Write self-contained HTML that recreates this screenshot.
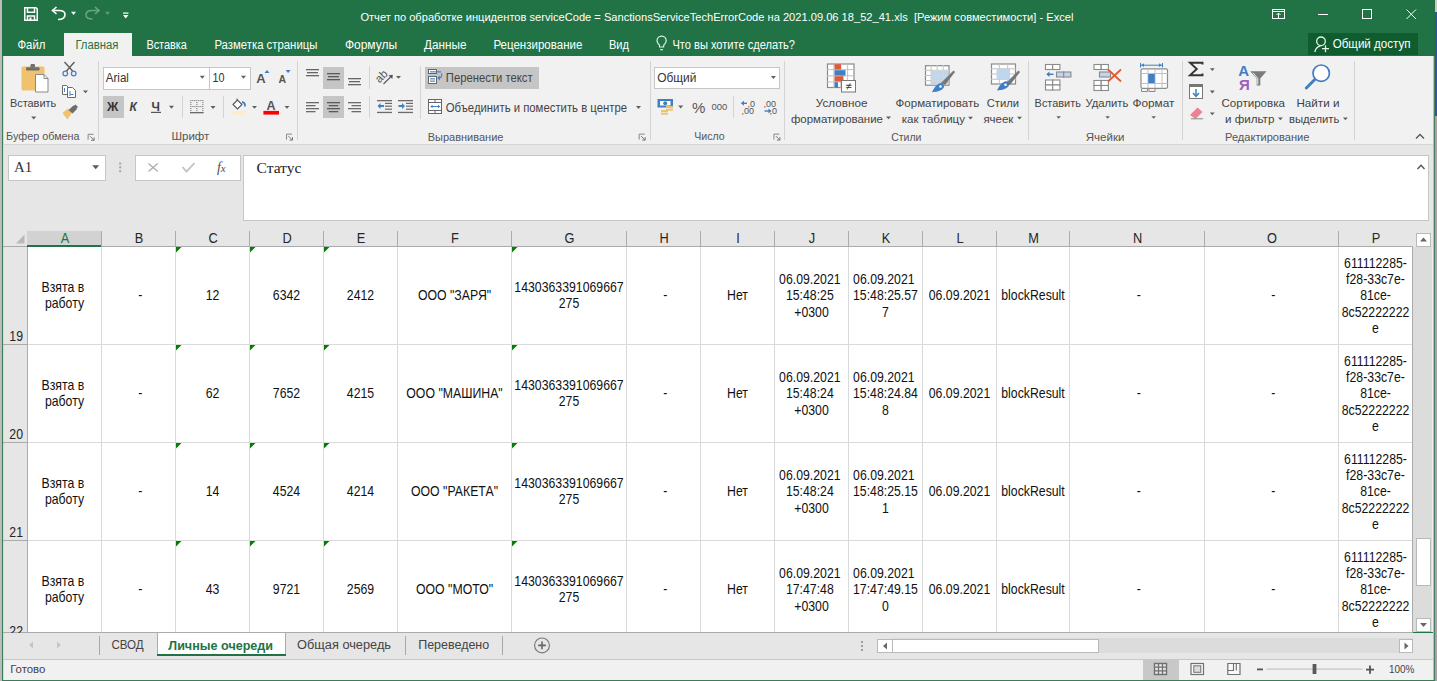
<!DOCTYPE html>
<html><head><meta charset="utf-8"><title>Excel</title>
<style>html,body{margin:0;padding:0;width:1437px;height:681px;overflow:hidden;background:#fff} svg{display:block}</style>
</head><body>
<svg width="1437" height="681" viewBox="0 0 1437 681">
<defs><clipPath id="gridclip"><rect x="28" y="247" width="1384" height="385"/></clipPath></defs>
<rect x="0" y="0" width="1437" height="681" fill="#bcbcbc" />
<rect x="2" y="0" width="1433" height="681" fill="#217346" />
<rect x="2" y="56" width="1" height="625" fill="#3b7d58" />
<rect x="3" y="56" width="1" height="625" fill="#cddfd3" />
<rect x="1434" y="56" width="1" height="625" fill="#4b7f63" />
<rect x="1433" y="56" width="1" height="625" fill="#a9c6b5" />
<rect x="1435" y="0" width="2" height="12" fill="#c8c8c8" />
<rect x="1435" y="12" width="2" height="104" fill="#2b5797" />
<rect x="1435" y="116" width="2" height="565" fill="#a3a3a3" />
<text x="360.4" y="21" font-family="'Liberation Sans', sans-serif" font-size="11.2" fill="#ffffff" textLength="713.0" lengthAdjust="spacingAndGlyphs" >Отчет по обработке инцидентов serviceCode = SanctionsServiceTechErrorCode на 2021.09.06 18_52_41.xls  [Режим совместимости] - Excel</text>
<rect x="64" y="33" width="68" height="23" fill="#f1f1f1" />
<text x="17.4" y="48.5" font-family="'Liberation Sans', sans-serif" font-size="12" fill="#ffffff" textLength="28.0" lengthAdjust="spacingAndGlyphs" >Файл</text>
<text x="75.4" y="48.5" font-family="'Liberation Sans', sans-serif" font-size="12" fill="#217346" textLength="43.0" lengthAdjust="spacingAndGlyphs" >Главная</text>
<text x="146.4" y="48.5" font-family="'Liberation Sans', sans-serif" font-size="12" fill="#ffffff" textLength="40.5" lengthAdjust="spacingAndGlyphs" >Вставка</text>
<text x="214.4" y="48.5" font-family="'Liberation Sans', sans-serif" font-size="12" fill="#ffffff" textLength="103.0" lengthAdjust="spacingAndGlyphs" >Разметка страницы</text>
<text x="344.9" y="48.5" font-family="'Liberation Sans', sans-serif" font-size="12" fill="#ffffff" textLength="52.2" lengthAdjust="spacingAndGlyphs" >Формулы</text>
<text x="424.09999999999997" y="48.5" font-family="'Liberation Sans', sans-serif" font-size="12" fill="#ffffff" textLength="42.3" lengthAdjust="spacingAndGlyphs" >Данные</text>
<text x="493.4" y="48.5" font-family="'Liberation Sans', sans-serif" font-size="12" fill="#ffffff" textLength="89.0" lengthAdjust="spacingAndGlyphs" >Рецензирование</text>
<text x="609.0" y="48.5" font-family="'Liberation Sans', sans-serif" font-size="12" fill="#ffffff" textLength="20.0" lengthAdjust="spacingAndGlyphs" >Вид</text>
<text x="672.4" y="48.5" font-family="'Liberation Sans', sans-serif" font-size="12" fill="#ffffff" textLength="122.6" lengthAdjust="spacingAndGlyphs" >Что вы хотите сделать?</text>
<rect x="1308" y="33" width="110" height="22" fill="#0f5c2f" />
<text x="1332.7" y="48" font-family="'Liberation Sans', sans-serif" font-size="12" fill="#ffffff" textLength="77.9" lengthAdjust="spacingAndGlyphs" >Общий доступ</text>
<rect x="4" y="56" width="1429" height="88" fill="#f1f1f1" />
<rect x="3" y="144" width="1430" height="1" fill="#d6d6d6" />
<rect x="98" y="61" width="1" height="79" fill="#d4d4d4" />
<rect x="297" y="61" width="1" height="79" fill="#d4d4d4" />
<rect x="650" y="61" width="1" height="79" fill="#d4d4d4" />
<rect x="784" y="61" width="1" height="79" fill="#d4d4d4" />
<rect x="1028" y="61" width="1" height="79" fill="#d4d4d4" />
<rect x="1182" y="61" width="1" height="79" fill="#d4d4d4" />
<rect x="1354" y="61" width="1" height="79" fill="#d4d4d4" />
<text x="9.9" y="106.6" font-family="'Liberation Sans', sans-serif" font-size="11.5" fill="#444444" textLength="46.3" lengthAdjust="spacingAndGlyphs" >Вставить</text>
<text x="6.1000000000000005" y="140" font-family="'Liberation Sans', sans-serif" font-size="10.2" fill="#555" textLength="73.5" lengthAdjust="spacingAndGlyphs" >Буфер обмена</text>
<rect x="103" y="67" width="147" height="22" fill="#ffffff" stroke="#c6c6c6" stroke-width="1" shape-rendering="crispEdges"/>
<rect x="209" y="67" width="1" height="22" fill="#c6c6c6" />
<text x="105.80000000000001" y="81.5" font-family="'Liberation Sans', sans-serif" font-size="12" fill="#333" textLength="23.1" lengthAdjust="spacingAndGlyphs" >Arial</text>
<text x="212.4" y="81.5" font-family="'Liberation Sans', sans-serif" font-size="12" fill="#333" textLength="12.0" lengthAdjust="spacingAndGlyphs" >10</text>
<rect x="103" y="96" width="21" height="22" fill="#c5c5c5" />
<text x="171.4" y="140" font-family="'Liberation Sans', sans-serif" font-size="10.2" fill="#555" textLength="38.0" lengthAdjust="spacingAndGlyphs" >Шрифт</text>
<rect x="323" y="67" width="21" height="22" fill="#c5c5c5" />
<rect x="323" y="96" width="21" height="22" fill="#c5c5c5" />
<rect x="425" y="67" width="114" height="22" fill="#c5c5c5" />
<text x="445.79999999999995" y="82.2" font-family="'Liberation Sans', sans-serif" font-size="12" fill="#444444" textLength="86.8" lengthAdjust="spacingAndGlyphs" >Перенести текст</text>
<text x="445.79999999999995" y="112" font-family="'Liberation Sans', sans-serif" font-size="12" fill="#444444" textLength="181.3" lengthAdjust="spacingAndGlyphs" >Объединить и поместить в центре</text>
<text x="427.7" y="140.5" font-family="'Liberation Sans', sans-serif" font-size="10.2" fill="#555" textLength="75.7" lengthAdjust="spacingAndGlyphs" >Выравнивание</text>
<rect x="654.5" y="67.5" width="125" height="21" fill="#ffffff" stroke="#c6c6c6" stroke-width="1"/>
<text x="657.1999999999999" y="81.6" font-family="'Liberation Sans', sans-serif" font-size="12" fill="#333" textLength="39.2" lengthAdjust="spacingAndGlyphs" >Общий</text>
<text x="694.1999999999999" y="140.4" font-family="'Liberation Sans', sans-serif" font-size="10.2" fill="#555" textLength="30.4" lengthAdjust="spacingAndGlyphs" >Число</text>
<text x="815.8" y="106.8" font-family="'Liberation Sans', sans-serif" font-size="11.5" fill="#444444" textLength="51.6" lengthAdjust="spacingAndGlyphs" >Условное</text>
<text x="790.9" y="122.8" font-family="'Liberation Sans', sans-serif" font-size="11.5" fill="#444444" textLength="92.1" lengthAdjust="spacingAndGlyphs" >форматирование</text>
<text x="895.6" y="106.8" font-family="'Liberation Sans', sans-serif" font-size="11.5" fill="#444444" textLength="83.6" lengthAdjust="spacingAndGlyphs" >Форматировать</text>
<text x="901.8" y="122.8" font-family="'Liberation Sans', sans-serif" font-size="11.5" fill="#444444" textLength="63.2" lengthAdjust="spacingAndGlyphs" >как таблицу</text>
<text x="986.6999999999999" y="106.8" font-family="'Liberation Sans', sans-serif" font-size="11.5" fill="#444444" textLength="32.4" lengthAdjust="spacingAndGlyphs" >Стили</text>
<text x="983.4" y="122.8" font-family="'Liberation Sans', sans-serif" font-size="11.5" fill="#444444" textLength="30.0" lengthAdjust="spacingAndGlyphs" >ячеек</text>
<text x="891.1999999999999" y="140.5" font-family="'Liberation Sans', sans-serif" font-size="10.2" fill="#555" textLength="30.2" lengthAdjust="spacingAndGlyphs" >Стили</text>
<text x="1034.6000000000001" y="107" font-family="'Liberation Sans', sans-serif" font-size="11.5" fill="#444444" textLength="46.3" lengthAdjust="spacingAndGlyphs" >Вставить</text>
<text x="1085.4" y="107" font-family="'Liberation Sans', sans-serif" font-size="11.5" fill="#444444" textLength="43.0" lengthAdjust="spacingAndGlyphs" >Удалить</text>
<text x="1132.4" y="107" font-family="'Liberation Sans', sans-serif" font-size="11.5" fill="#444444" textLength="42.0" lengthAdjust="spacingAndGlyphs" >Формат</text>
<text x="1085.8000000000002" y="140.6" font-family="'Liberation Sans', sans-serif" font-size="10.2" fill="#555" textLength="38.6" lengthAdjust="spacingAndGlyphs" >Ячейки</text>
<text x="1221.4" y="107" font-family="'Liberation Sans', sans-serif" font-size="11.5" fill="#444444" textLength="63.6" lengthAdjust="spacingAndGlyphs" >Сортировка</text>
<text x="1225.0" y="122.8" font-family="'Liberation Sans', sans-serif" font-size="11.5" fill="#444444" textLength="49.4" lengthAdjust="spacingAndGlyphs" >и фильтр</text>
<text x="1296.4" y="107" font-family="'Liberation Sans', sans-serif" font-size="11.5" fill="#444444" textLength="43.0" lengthAdjust="spacingAndGlyphs" >Найти и</text>
<text x="1288.9" y="122.8" font-family="'Liberation Sans', sans-serif" font-size="11.5" fill="#444444" textLength="50.5" lengthAdjust="spacingAndGlyphs" >выделить</text>
<text x="1225.0" y="140.5" font-family="'Liberation Sans', sans-serif" font-size="10.2" fill="#555" textLength="84.4" lengthAdjust="spacingAndGlyphs" >Редактирование</text>
<g fill="none" stroke="#fff" stroke-width="1.5"><path d="M24.75,7.75 H36 L37.25,9 V20.25 H24.75 Z"/><path d="M27.5,7.75 V12.25 H34.5 V7.75"/><path d="M27.5,20.25 V16 H34.5 V20.25"/></g>
<rect x="29.5" y="17.5" width="2" height="2.5" fill="#fff"/>
<path d="M58,19.5 C62.5,19.5 65,17.5 65,14.5 C65,11.5 62.5,10.5 59,10.5 H53.5" fill="none" stroke="#fff" stroke-width="1.6"/><path d="M56.5,7 L52.5,10.5 L56.5,14" fill="none" stroke="#fff" stroke-width="1.6"/>
<polygon points="71,11.7 76,11.7 73.5,14.899999999999999" fill="#fff"/>
<path d="M92.5,19 C88,19 86,17.5 86,15 C86,12 88.5,10.5 92,10.5 H98" fill="none" stroke="#6aa584" stroke-width="1.6"/><path d="M95,7 L99,10.5 L95,14" fill="none" stroke="#6aa584" stroke-width="1.6"/>
<polygon points="105,11.7 110,11.7 107.5,14.899999999999999" fill="#5c9c78"/>
<rect x="123" y="12.5" width="5.5" height="1.2" fill="#fff"/>
<polygon points="123,15 128.5,15 125.75,18.5" fill="#fff"/>
<g fill="none" stroke="#fff" stroke-width="1"><rect x="1272.5" y="9.5" width="12" height="9"/><path d="M1272.5,11.5 H1284.5 M1278.5,18.5 V13 M1276.5,15 L1278.5,13 L1280.5,15"/><path d="M1318,14.5 H1328"/><rect x="1362.5" y="9.5" width="9" height="9"/><path d="M1406.5,9.5 L1416,19 M1416,9.5 L1406.5,19"/></g>
<g fill="none" stroke="#e6efe9" stroke-width="1.2"><path d="M659.6,47 L659.4,45 C657.5,43.5 657,42 657,40.8 C657,38.2 659,36.2 661.6,36.2 C664.2,36.2 666.2,38.2 666.2,40.8 C666.2,42 665.7,43.5 663.8,45 L663.6,47 Z"/><path d="M660.2,49.7 H663"/></g>
<g fill="none" stroke="#e8f0ea" stroke-width="1.3"><circle cx="1321" cy="41.3" r="4.3"/><path d="M1314.8,52 C1315.5,48.5 1317.5,46.5 1320.5,45.8"/><path d="M1322,48.7 H1329 M1325.5,45.2 V52.2"/></g>
<rect x="21.5" y="66.5" width="23" height="24" rx="1.5" fill="#f0c26e"/>
<rect x="26" y="67.3" width="13.5" height="3.2" rx="1" fill="#6d6d6d"/>
<rect x="30.5" y="64" width="4.5" height="3.5" rx="1.2" fill="#6d6d6d"/>
<path d="M35.5,74.5 H44 L48,78.5 V92 H35.5 Z" fill="#fff" stroke="#8a8a8a" stroke-width="1"/>
<path d="M44,74.5 V78.5 H48" fill="none" stroke="#8a8a8a" stroke-width="1"/>
<polygon points="31.2,116.6 36.2,116.6 33.7,119.6" fill="#5f5f5f"/>
<g fill="none" stroke="#5b5b5b" stroke-width="1.3"><path d="M64.5,62 L73,71.5 M74.5,62 L66,71.5"/></g>
<g fill="none" stroke="#4a82c3" stroke-width="1.3"><circle cx="65.3" cy="73.5" r="2.3"/><circle cx="73.7" cy="73.5" r="2.3"/></g>
<path d="M62.5,85.5 H66.5 L68.5,87.5 V94.5 H62.5 Z" fill="#fff" stroke="#6b6b6b" stroke-width="1"/>
<path d="M67.5,87.5 H72.5 L75.5,90.5 V97.5 H67.5 Z" fill="#fff" stroke="#6b6b6b" stroke-width="1"/>
<rect x="64" y="88" width="1" height="4" fill="#4a82c3"/><rect x="69.5" y="91" width="1" height="5" fill="#4a82c3"/><rect x="70.5" y="94" width="3" height="1" fill="#4a82c3"/>
<polygon points="83,90.5 88,90.5 85.5,93.3" fill="#5f5f5f"/>
<path d="M62.5,113 L68,108.5 L72,112.5 L67.5,119.5 Z" fill="#f0c26e"/>
<path d="M68.5,110 L73.5,105.5 L77,109 L72.5,113.5 Z" fill="#6d6d6d"/>
<path d="M72.5,107 L75.5,104.5 L78,107 L75.5,109.5 Z" fill="#6d6d6d"/>
<polygon points="199.8,75.8 204.8,75.8 202.3,78.8" fill="#5f5f5f"/>
<polygon points="241,75.8 246,75.8 243.5,78.8" fill="#5f5f5f"/>
<text x="256.3" y="83" font-family="'Liberation Sans', sans-serif" font-size="13" fill="#555" font-weight="bold" >A</text>
<polygon points="264.5,73 269.5,73 267,70" fill="#3f7fc4"/>
<text x="278.6" y="83" font-family="'Liberation Sans', sans-serif" font-size="10.5" fill="#555" font-weight="bold" >A</text>
<polygon points="285.6,70 290.6,70 288.1,73" fill="#3f7fc4"/>
<text x="107" y="111" font-family="'Liberation Sans', sans-serif" font-size="12.5" fill="#333" font-weight="bold" >Ж</text>
<text x="129.5" y="111" font-family="'Liberation Sans', sans-serif" font-size="12" fill="#444" font-weight="bold" font-style="italic">К</text>
<text x="151.5" y="111" font-family="'Liberation Sans', sans-serif" font-size="12" fill="#444" font-weight="bold" >Ч</text>
<rect x="151" y="111.8" width="10" height="1.2" fill="#555" />
<polygon points="169,105.8 174,105.8 171.5,108.8" fill="#5f5f5f"/>
<rect x="182" y="96" width="1" height="22" fill="#d4d4d4" />
<g fill="#7a7a7a"><rect x="190.3" y="100" width="1.1" height="1.1"/><rect x="190.3" y="102" width="1.1" height="1.1"/><rect x="190.3" y="104" width="1.1" height="1.1"/><rect x="190.3" y="106" width="1.1" height="1.1"/><rect x="190.3" y="108" width="1.1" height="1.1"/><rect x="190.3" y="110" width="1.1" height="1.1"/><rect x="190.3" y="112" width="1.1" height="1.1"/><rect x="192.3" y="100" width="1.1" height="1.1"/><rect x="192.3" y="106" width="1.1" height="1.1"/><rect x="192.3" y="112" width="1.1" height="1.1"/><rect x="194.3" y="100" width="1.1" height="1.1"/><rect x="194.3" y="106" width="1.1" height="1.1"/><rect x="194.3" y="112" width="1.1" height="1.1"/><rect x="196.3" y="100" width="1.1" height="1.1"/><rect x="196.3" y="102" width="1.1" height="1.1"/><rect x="196.3" y="104" width="1.1" height="1.1"/><rect x="196.3" y="106" width="1.1" height="1.1"/><rect x="196.3" y="108" width="1.1" height="1.1"/><rect x="196.3" y="110" width="1.1" height="1.1"/><rect x="196.3" y="112" width="1.1" height="1.1"/><rect x="198.3" y="100" width="1.1" height="1.1"/><rect x="198.3" y="106" width="1.1" height="1.1"/><rect x="198.3" y="112" width="1.1" height="1.1"/><rect x="200.3" y="100" width="1.1" height="1.1"/><rect x="200.3" y="106" width="1.1" height="1.1"/><rect x="200.3" y="112" width="1.1" height="1.1"/><rect x="202.3" y="100" width="1.1" height="1.1"/><rect x="202.3" y="102" width="1.1" height="1.1"/><rect x="202.3" y="104" width="1.1" height="1.1"/><rect x="202.3" y="106" width="1.1" height="1.1"/><rect x="202.3" y="108" width="1.1" height="1.1"/><rect x="202.3" y="110" width="1.1" height="1.1"/><rect x="202.3" y="112" width="1.1" height="1.1"/></g>
<rect x="190" y="112" width="13.5" height="1.3" fill="#6b6b6b" />
<polygon points="210.5,106 215.5,106 213.0,109" fill="#5f5f5f"/>
<rect x="223" y="96" width="1" height="22" fill="#d4d4d4" />
<rect x="231" y="110.8" width="15" height="3.6" fill="#fdeec6" />
<path d="M233,104.5 L237.5,100 L242,104.5 L237.5,109 Z" fill="#fff" stroke="#555" stroke-width="1.1"/>
<path d="M237,100.5 V98.5" stroke="#555" stroke-width="1"/>
<path d="M242,102 C244.5,102.5 245.5,104 244.8,106.5" fill="none" stroke="#3f7fc4" stroke-width="1.8"/>
<polygon points="252,106 257,106 254.5,108.8" fill="#5f5f5f"/>
<text x="266.6" y="110.2" font-family="'Liberation Sans', sans-serif" font-size="12.5" fill="#555" font-weight="bold" >A</text>
<rect x="263.4" y="110.9" width="15.6" height="3.7" fill="#ff0000" />
<polygon points="284.5,106 289.5,106 287.0,108.8" fill="#5f5f5f"/>
<rect x="306.0" y="69" width="13" height="1.3" fill="#666" />
<rect x="307.0" y="72" width="11" height="1.3" fill="#666" />
<rect x="306.0" y="75" width="13" height="1.3" fill="#666" />
<rect x="327.0" y="73" width="13" height="1.3" fill="#5a5a5a" />
<rect x="328.0" y="76" width="11" height="1.3" fill="#5a5a5a" />
<rect x="327.0" y="79" width="13" height="1.3" fill="#5a5a5a" />
<rect x="348.0" y="78" width="13" height="1.3" fill="#666" />
<rect x="349.0" y="81" width="11" height="1.3" fill="#666" />
<rect x="348.0" y="84" width="13" height="1.3" fill="#666" />
<rect x="369" y="66" width="1" height="23" fill="#d4d4d4" />
<text x="0" y="0" font-family="'Liberation Sans'" font-size="11.5" fill="#555" transform="translate(379.5,83.5) rotate(-45)">ab</text>
<path d="M383.5,84 L391.5,76" stroke="#555" stroke-width="1.1"/><polygon points="392.8,74.7 392.3,79 388.5,75.2" fill="#555"/>
<polygon points="396,76 401,76 398.5,78.8" fill="#5f5f5f"/>
<rect x="306" y="102" width="13" height="1.3" fill="#6b6b6b" />
<rect x="306" y="105" width="9.5" height="1.3" fill="#6b6b6b" />
<rect x="306" y="108" width="13" height="1.3" fill="#6b6b6b" />
<rect x="306" y="111" width="9.5" height="1.3" fill="#6b6b6b" />
<rect x="327.0" y="102" width="13" height="1.3" fill="#5a5a5a" />
<rect x="328.75" y="105" width="9.5" height="1.3" fill="#5a5a5a" />
<rect x="327.0" y="108" width="13" height="1.3" fill="#5a5a5a" />
<rect x="328.75" y="111" width="9.5" height="1.3" fill="#5a5a5a" />
<rect x="348" y="102" width="13" height="1.3" fill="#6b6b6b" />
<rect x="351.5" y="105" width="9.5" height="1.3" fill="#6b6b6b" />
<rect x="348" y="108" width="13" height="1.3" fill="#6b6b6b" />
<rect x="351.5" y="111" width="9.5" height="1.3" fill="#6b6b6b" />
<rect x="369" y="96" width="1" height="22" fill="#d4d4d4" />
<rect x="377" y="100" width="15" height="1.3" fill="#6b6b6b" />
<rect x="377" y="111.8" width="15" height="1.3" fill="#6b6b6b" />
<rect x="385" y="102.8" width="7" height="1.2" fill="#6b6b6b" />
<rect x="385" y="105.6" width="7" height="1.2" fill="#6b6b6b" />
<rect x="385" y="108.6" width="7" height="1.2" fill="#6b6b6b" />
<path d="M377.5,106 L380.5,103 L380.5,105.1 H384 V106.9 H380.5 V109 Z" fill="#3f7fc4"/>
<rect x="398" y="100" width="15" height="1.3" fill="#6b6b6b" />
<rect x="398" y="111.8" width="15" height="1.3" fill="#6b6b6b" />
<rect x="406" y="102.8" width="7" height="1.2" fill="#6b6b6b" />
<rect x="406" y="105.6" width="7" height="1.2" fill="#6b6b6b" />
<rect x="406" y="108.6" width="7" height="1.2" fill="#6b6b6b" />
<path d="M405,106 L402,103 L402,105.1 H398.5 V106.9 H402 V109 Z" fill="#3f7fc4"/>
<rect x="420" y="66" width="1" height="53" fill="#d4d4d4" />
<rect x="428.5" y="69.5" width="8" height="4" fill="#fff" stroke="#666" stroke-width="1"/>
<rect x="430" y="71.3" width="11" height="1.1" fill="#3f7fc4" />
<rect x="428.5" y="76.5" width="8" height="7" fill="#fff" stroke="#666" stroke-width="1"/>
<rect x="430" y="78.3" width="5" height="1.1" fill="#3f7fc4" />
<rect x="430" y="80.6" width="5" height="1.1" fill="#3f7fc4" />
<path d="M441.5,73.5 C442.5,76.5 441,78 438.5,78" fill="none" stroke="#3f7fc4" stroke-width="1.2"/><polygon points="437.3,78 439.8,75.6 439.8,80.4" fill="#3f7fc4"/>
<rect x="428.5" y="99.5" width="13" height="14" fill="#fff" stroke="#666" stroke-width="1"/>
<path d="M428.5,102.5 H441.5 M428.5,110.5 H441.5 M435,99.5 V102.5 M435,110.5 V113.5" stroke="#666" stroke-width="1"/>
<path d="M431,106.5 H439.5" stroke="#3f7fc4" stroke-width="1"/><polygon points="430.3,106.5 432.5,104.8 432.5,108.2" fill="#3f7fc4"/><polygon points="440.2,106.5 438,104.8 438,108.2" fill="#3f7fc4"/>
<polygon points="636,106 641,106 638.5,109" fill="#5f5f5f"/>
<path d="M88.1,139.8 V134.3 H93.6" fill="none" stroke="#888" stroke-width="1"/><path d="M90.1,136.3 L94.1,140.3 M94.1,137.3 V140.3 H91.1" fill="none" stroke="#777" stroke-width="1"/>
<path d="M286.5,139.6 V134.1 H292" fill="none" stroke="#888" stroke-width="1"/><path d="M288.5,136.1 L292.5,140.1 M292.5,137.1 V140.1 H289.5" fill="none" stroke="#777" stroke-width="1"/>
<path d="M639.2,139.6 V134.1 H644.7" fill="none" stroke="#888" stroke-width="1"/><path d="M641.2,136.1 L645.2,140.1 M645.2,137.1 V140.1 H642.2" fill="none" stroke="#777" stroke-width="1"/>
<path d="M773.9,139.6 V134.1 H779.4" fill="none" stroke="#888" stroke-width="1"/><path d="M775.9,136.1 L779.9,140.1 M779.9,137.1 V140.1 H776.9" fill="none" stroke="#777" stroke-width="1"/>
<polygon points="770.9,76 775.9,76 773.4,79" fill="#5f5f5f"/>
<rect x="657.5" y="99" width="15.5" height="8.5" fill="#3f7fc4"/>
<rect x="660" y="101" width="10.5" height="4.5" fill="#fff"/><circle cx="665.2" cy="103.2" r="2" fill="#3f7fc4"/>
<g fill="#f0c26e"><rect x="666" y="106" width="7" height="2"/><rect x="666" y="108.7" width="7" height="2"/><rect x="661" y="110" width="7" height="2"/><rect x="661" y="112.7" width="7" height="2"/></g>
<polygon points="678.2,105.6 683.2,105.6 680.7,108.6" fill="#5f5f5f"/>
<text x="692" y="112.8" font-family="'Liberation Sans', sans-serif" font-size="15" fill="#555" >%</text>
<text x="711.5" y="110" font-family="'Liberation Sans', sans-serif" font-size="9.5" fill="#555" >000</text>
<rect x="733" y="96" width="1" height="22" fill="#d4d4d4" />
<path d="M741.5,103.3 H747" stroke="#3f7fc4" stroke-width="1.4"/><polygon points="741,103.3 744,100.8 744,105.8" fill="#3f7fc4"/>
<text x="747.5" y="106.5" font-family="'Liberation Sans', sans-serif" font-size="9" fill="#555" >,0</text>
<text x="741.5" y="114" font-family="'Liberation Sans', sans-serif" font-size="9" fill="#555" >,00</text>
<text x="763.5" y="106.5" font-family="'Liberation Sans', sans-serif" font-size="9" fill="#555" >,00</text>
<path d="M764.5,111 H770" stroke="#3f7fc4" stroke-width="1.4"/><polygon points="771.5,111 768.5,108.5 768.5,113.5" fill="#3f7fc4"/>
<text x="769.5" y="114" font-family="'Liberation Sans', sans-serif" font-size="9" fill="#555" >,0</text>
<rect x="827.5" y="64.0" width="26.5" height="23.5" fill="#fff" stroke="#8a8a8a" stroke-width="1.2"/>
<path d="M833.9,63.5 V88.0" stroke="#c0c0c0" stroke-width="1"/>
<path d="M840.8,63.5 V88.0" stroke="#c0c0c0" stroke-width="1"/>
<path d="M847.6,63.5 V88.0" stroke="#c0c0c0" stroke-width="1"/>
<path d="M827,69.6 H854.5" stroke="#c0c0c0" stroke-width="1"/>
<path d="M827,75.8 H854.5" stroke="#c0c0c0" stroke-width="1"/>
<path d="M827,81.9 H854.5" stroke="#c0c0c0" stroke-width="1"/>
<rect x="834.5" y="64.2" width="6.5" height="5.3" fill="#e05a3a" />
<rect x="834.5" y="70.2" width="11" height="5.3" fill="#3f7fc4" />
<rect x="834.5" y="76.2" width="9" height="5.3" fill="#e05a3a" />
<rect x="834.5" y="82.2" width="3.5" height="5.3" fill="#3f7fc4" />
<rect x="841.5" y="80.5" width="14" height="11.5" fill="#fff" stroke="#777" stroke-width="1"/>
<text x="848.5" y="90" font-family="'Liberation Sans', sans-serif" font-size="11" fill="#333" text-anchor="middle" >≠</text>
<rect x="925.5" y="65.7" width="23.5" height="19.5" fill="#fff" stroke="#8a8a8a" stroke-width="1.2"/>
<path d="M931.1,65.2 V85.7" stroke="#c0c0c0" stroke-width="1"/>
<path d="M937.2,65.2 V85.7" stroke="#c0c0c0" stroke-width="1"/>
<path d="M943.4,65.2 V85.7" stroke="#c0c0c0" stroke-width="1"/>
<path d="M925,70.3 H949.5" stroke="#c0c0c0" stroke-width="1"/>
<path d="M925,75.5 H949.5" stroke="#c0c0c0" stroke-width="1"/>
<path d="M925,80.6 H949.5" stroke="#c0c0c0" stroke-width="1"/>
<rect x="931.5" y="70.7" width="17" height="14" fill="#c0d6ec" />
<path d="M931.5,70.7 H949 M931.5,75.8 H949 M931.5,80.3 H949 M937.3,65.5 V85.5 M943.3,65.5 V85.5" stroke="#d8d8d8" stroke-width="0.8"/>
<path d="M941,83 L951,73 L953.5,70.5 L955,72 L945,85 Z" fill="#777"/>
<path d="M932,92.2 C934,87.5 937,84 940.5,83 C942.5,83 944.5,85 944,87 C942.5,90.5 937,92 932,92.2 Z" fill="#3f7fc4"/>
<circle cx="940.5" cy="86.5" r="1.3" fill="#fff"/>
<polygon points="886,116.4 891,116.4 888.5,119.2" fill="#5f5f5f"/>
<polygon points="968,116.8 973,116.8 970.5,119.6" fill="#5f5f5f"/>
<rect x="991.5" y="64.0" width="24" height="20" fill="#fff" stroke="#8a8a8a" stroke-width="1.2"/>
<path d="M999.3,63.5 V84.5" stroke="#c0c0c0" stroke-width="1"/>
<path d="M1007.7,63.5 V84.5" stroke="#c0c0c0" stroke-width="1"/>
<path d="M991,68.8 H1016" stroke="#c0c0c0" stroke-width="1"/>
<path d="M991,74.0 H1016" stroke="#c0c0c0" stroke-width="1"/>
<path d="M991,79.2 H1016" stroke="#c0c0c0" stroke-width="1"/>
<rect x="996.5" y="68.7" width="13.5" height="10.5" fill="#c0d6ec" />
<path d="M1006,83 L1016,73 L1018.5,70.5 L1020,72 L1010,85 Z" fill="#777"/>
<path d="M997,90.5 C999,85.8 1002,82.3 1005.5,81.3 C1007.5,81.3 1009.5,83.3 1009,85.3 C1007.5,88.8 1002,90.3 997,90.5 Z" fill="#3f7fc4"/>
<circle cx="1005.5" cy="84.8" r="1.3" fill="#fff"/>
<polygon points="1017,116.8 1022,116.8 1019.5,119.6" fill="#5f5f5f"/>
<rect x="1045.5" y="64.5" width="7.2" height="5" fill="#fff" stroke="#8a8a8a" stroke-width="1.1"/>
<rect x="1052.7" y="64.5" width="7.2" height="5" fill="#fff" stroke="#8a8a8a" stroke-width="1.1"/>
<rect x="1056.5" y="72.0" width="7.2" height="5" fill="#c0d6ec" stroke="#8a8a8a" stroke-width="1.1"/>
<rect x="1063.7" y="72.0" width="7.2" height="5" fill="#c0d6ec" stroke="#8a8a8a" stroke-width="1.1"/>
<path d="M1047,74.3 H1053.5" stroke="#3f7fc4" stroke-width="1.5"/><polygon points="1046.3,74.3 1049.5,71.5 1049.5,77" fill="#3f7fc4"/>
<rect x="1045.5" y="80.0" width="7.2" height="5" fill="#fff" stroke="#8a8a8a" stroke-width="1.1"/>
<rect x="1052.7" y="80.0" width="7.2" height="5" fill="#fff" stroke="#8a8a8a" stroke-width="1.1"/>
<rect x="1045.5" y="85.0" width="7.2" height="5" fill="#fff" stroke="#8a8a8a" stroke-width="1.1"/>
<rect x="1052.7" y="85.0" width="7.2" height="5" fill="#fff" stroke="#8a8a8a" stroke-width="1.1"/>
<rect x="1094.0" y="64.5" width="7.2" height="5" fill="#fff" stroke="#8a8a8a" stroke-width="1.1"/>
<rect x="1101.2" y="64.5" width="7.2" height="5" fill="#fff" stroke="#8a8a8a" stroke-width="1.1"/>
<rect x="1099.5" y="72.0" width="11.0" height="5" fill="#c0d6ec" stroke="#8a8a8a" stroke-width="1.1"/>
<rect x="1094.0" y="80.5" width="7.2" height="5" fill="#fff" stroke="#8a8a8a" stroke-width="1.1"/>
<rect x="1101.2" y="80.5" width="7.2" height="5" fill="#fff" stroke="#8a8a8a" stroke-width="1.1"/>
<rect x="1094.0" y="85.5" width="7.2" height="5" fill="#fff" stroke="#8a8a8a" stroke-width="1.1"/>
<rect x="1101.2" y="85.5" width="7.2" height="5" fill="#fff" stroke="#8a8a8a" stroke-width="1.1"/>
<path d="M1108,69.5 L1121,81.5 M1121,69.5 L1108,81.5" stroke="#e05a3a" stroke-width="1.8"/>
<polygon points="1056.4,116.2 1060.9,116.2 1058.65,118.7" fill="#5f5f5f"/>
<polygon points="1105.4,116.2 1109.9,116.2 1107.65,118.7" fill="#5f5f5f"/>
<polygon points="1151.4,116.2 1155.9,116.2 1153.65,118.7" fill="#5f5f5f"/>
<path d="M1141,65.2 H1162" stroke="#3f7fc4" stroke-width="1"/><path d="M1140.5,63 V67.5 M1162.5,63 V67.5" stroke="#3f7fc4" stroke-width="1"/>
<polygon points="1141.3,65.2 1144,63.3 1144,67.1" fill="#3f7fc4"/><polygon points="1161.7,65.2 1159,63.3 1159,67.1" fill="#3f7fc4"/>
<rect x="1141" y="68.8" width="26.5" height="19.5" rx="1.5" fill="#fff" stroke="#8a8a8a" stroke-width="1.2"/>
<path d="M1141,73.5 H1167.5 M1141,83.5 H1167.5 M1148,68.8 V88.3 M1155,68.8 V88.3 M1162,68.8 V88.3" stroke="#c0c0c0" stroke-width="1"/>
<rect x="1148.2" y="74" width="6.6" height="9.1" fill="#3f7fc4" />
<path d="M1141.5,88.5 V91.5 H1147.5 V88.5 M1149,88.5 V91.5 H1155 V88.5" fill="none" stroke="#8a8a8a" stroke-width="1"/>
<path d="M1202.5,64.5 V62.8 H1190 L1196.8,69 L1190,75.2 H1202.5 V73.5" fill="none" stroke="#333" stroke-width="1.9" stroke-linejoin="miter"/>
<polygon points="1209.9,68.3 1214.7,68.3 1212.3000000000002,71.1" fill="#5f5f5f"/>
<rect x="1189.5" y="84.5" width="13" height="14" fill="#fff" stroke="#777" stroke-width="1"/>
<rect x="1189.5" y="84.5" width="13.5" height="2.5" fill="#777" />
<path d="M1196,89 V96" stroke="#3f7fc4" stroke-width="1.5"/><path d="M1193,93 L1196,96.3 L1199,93" fill="none" stroke="#3f7fc4" stroke-width="1.5"/>
<polygon points="1209.9,90.6 1214.7,90.6 1212.3000000000002,93.39999999999999" fill="#5f5f5f"/>
<path d="M1190,115 L1197.5,107.5 L1202.5,112 L1195.5,119 Z" fill="#ee8094"/>
<path d="M1191,118.8 H1203" stroke="#888" stroke-width="1"/>
<polygon points="1209.9,112.5 1214.7,112.5 1212.3000000000002,115.3" fill="#5f5f5f"/>
<text x="1238.3" y="76.1" font-family="'Liberation Sans', sans-serif" font-size="15" fill="#3f7fc4" font-weight="bold" >A</text>
<text x="1239" y="89.5" font-family="'Liberation Sans', sans-serif" font-size="15" fill="#9b5fc0" font-weight="bold" >Я</text>
<path d="M1250.2,71.2 H1266.5 L1260.3,78.5 V85.5 H1256.7 V78.5 Z" fill="#7b7b7b"/>
<path d="M1253,72.8 L1257.8,78.5 V84.5" fill="none" stroke="#fff" stroke-width="0.9"/>
<polygon points="1278,117.5 1282.8,117.5 1280.4,120.3" fill="#5f5f5f"/>
<circle cx="1321.2" cy="73.2" r="8.2" fill="#fff" stroke="#3f7fc4" stroke-width="1.7"/>
<path d="M1306.3,88 L1314.8,79.5" stroke="#3f7fc4" stroke-width="3" stroke-linecap="round"/>
<polygon points="1343,117.5 1347.8,117.5 1345.4,120.3" fill="#5f5f5f"/>
<path d="M1416,138.5 L1420,134.5 L1424,138.5" fill="none" stroke="#555" stroke-width="1.3"/>
<rect x="4" y="145" width="1429" height="86" fill="#e6e6e6" />
<rect x="8.5" y="155.5" width="97" height="25" fill="#ffffff" stroke="#c6c6c6" stroke-width="1"/>
<text x="13.9" y="172.2" font-family="'Liberation Serif', serif" font-size="15" fill="#333" textLength="18.2" lengthAdjust="spacingAndGlyphs" >A1</text>
<rect x="135.5" y="155.5" width="105" height="25" fill="#ffffff" stroke="#c6c6c6" stroke-width="1"/>
<rect x="243.5" y="155.5" width="1185" height="65" fill="#ffffff" stroke="#c6c6c6" stroke-width="1"/>
<text x="256.59999999999997" y="173" font-family="'Liberation Serif', serif" font-size="15" fill="#222" textLength="44.7" lengthAdjust="spacingAndGlyphs" >Статус</text>
<polygon points="92.2,165.3 99.2,165.3 95.7,169.3" fill="#5a5a5a"/>
<rect x="119.2" y="162.5" width="2" height="2" fill="#a6a6a6" />
<rect x="119.2" y="166.3" width="2" height="2" fill="#a6a6a6" />
<rect x="119.2" y="170.2" width="2" height="2" fill="#a6a6a6" />
<path d="M148.5,163.5 L157.8,171.5 M157.8,163.5 L148.5,171.5" stroke="#ababab" stroke-width="1.2"/>
<path d="M182.5,167 L186.5,171.6 L194.5,163" fill="none" stroke="#c2c2c2" stroke-width="1.8"/>
<text x="217" y="171.5" font-family="'Liberation Serif', serif" font-size="14" fill="#505050" font-style="italic">f</text>
<text x="220.8" y="171.5" font-family="'Liberation Serif', serif" font-size="11" fill="#505050" font-style="italic">x</text>
<path d="M1417.5,169 L1421,165.3 L1424.5,169" fill="none" stroke="#5a5a5a" stroke-width="1.5"/>
<rect x="4" y="231" width="1409" height="16" fill="#e6e6e6" />
<rect x="27" y="231" width="74" height="14" fill="#d2d2d2" />
<rect x="3" y="246" width="1410" height="1" fill="#ababab" />
<rect x="27" y="245" width="74" height="2" fill="#217346" />
<rect x="27" y="247" width="1" height="386" fill="#ababab" />
<rect x="101" y="231" width="1" height="15" fill="#ababab" />
<rect x="175" y="231" width="1" height="15" fill="#ababab" />
<rect x="249" y="231" width="1" height="15" fill="#ababab" />
<rect x="323" y="231" width="1" height="15" fill="#ababab" />
<rect x="397" y="231" width="1" height="15" fill="#ababab" />
<rect x="511" y="231" width="1" height="15" fill="#ababab" />
<rect x="626" y="231" width="1" height="15" fill="#ababab" />
<rect x="700" y="231" width="1" height="15" fill="#ababab" />
<rect x="774" y="231" width="1" height="15" fill="#ababab" />
<rect x="848" y="231" width="1" height="15" fill="#ababab" />
<rect x="922" y="231" width="1" height="15" fill="#ababab" />
<rect x="996" y="231" width="1" height="15" fill="#ababab" />
<rect x="1069" y="231" width="1" height="15" fill="#ababab" />
<rect x="1204" y="231" width="1" height="15" fill="#ababab" />
<rect x="1338" y="231" width="1" height="15" fill="#ababab" />
<polygon points="24.5,234.5 24.5,243.5 16,243.5" fill="#b9b9b9"/>
<rect x="28" y="247" width="1384" height="385" fill="#ffffff" />
<rect x="4" y="247" width="23" height="385" fill="#e6e6e6" />
<rect x="101" y="247" width="1" height="385" fill="#dadada" />
<rect x="175" y="247" width="1" height="385" fill="#dadada" />
<rect x="249" y="247" width="1" height="385" fill="#dadada" />
<rect x="323" y="247" width="1" height="385" fill="#dadada" />
<rect x="397" y="247" width="1" height="385" fill="#dadada" />
<rect x="511" y="247" width="1" height="385" fill="#dadada" />
<rect x="626" y="247" width="1" height="385" fill="#dadada" />
<rect x="700" y="247" width="1" height="385" fill="#dadada" />
<rect x="774" y="247" width="1" height="385" fill="#dadada" />
<rect x="848" y="247" width="1" height="385" fill="#dadada" />
<rect x="922" y="247" width="1" height="385" fill="#dadada" />
<rect x="996" y="247" width="1" height="385" fill="#dadada" />
<rect x="1069" y="247" width="1" height="385" fill="#dadada" />
<rect x="1204" y="247" width="1" height="385" fill="#dadada" />
<rect x="1338" y="247" width="1" height="385" fill="#dadada" />
<rect x="1412" y="247" width="1" height="386" fill="#ababab" />
<rect x="28" y="344" width="1384" height="1" fill="#dadada" />
<rect x="3" y="344" width="24" height="1" fill="#ababab" />
<rect x="28" y="442" width="1384" height="1" fill="#dadada" />
<rect x="3" y="442" width="24" height="1" fill="#ababab" />
<rect x="28" y="540" width="1384" height="1" fill="#dadada" />
<rect x="3" y="540" width="24" height="1" fill="#ababab" />
<rect x="3" y="632" width="1410" height="1" fill="#ababab" />
<text transform="translate(65.0,243.2) scale(1,1.1)" x="0" y="0" font-family="'Liberation Sans', sans-serif" font-size="12.8" fill="#217346" text-anchor="middle">A</text>
<text transform="translate(139.0,243.2) scale(1,1.1)" x="0" y="0" font-family="'Liberation Sans', sans-serif" font-size="12.8" fill="#262626" text-anchor="middle">B</text>
<text transform="translate(213.0,243.2) scale(1,1.1)" x="0" y="0" font-family="'Liberation Sans', sans-serif" font-size="12.8" fill="#262626" text-anchor="middle">C</text>
<text transform="translate(287.0,243.2) scale(1,1.1)" x="0" y="0" font-family="'Liberation Sans', sans-serif" font-size="12.8" fill="#262626" text-anchor="middle">D</text>
<text transform="translate(361.0,243.2) scale(1,1.1)" x="0" y="0" font-family="'Liberation Sans', sans-serif" font-size="12.8" fill="#262626" text-anchor="middle">E</text>
<text transform="translate(455.0,243.2) scale(1,1.1)" x="0" y="0" font-family="'Liberation Sans', sans-serif" font-size="12.8" fill="#262626" text-anchor="middle">F</text>
<text transform="translate(569.5,243.2) scale(1,1.1)" x="0" y="0" font-family="'Liberation Sans', sans-serif" font-size="12.8" fill="#262626" text-anchor="middle">G</text>
<text transform="translate(664.0,243.2) scale(1,1.1)" x="0" y="0" font-family="'Liberation Sans', sans-serif" font-size="12.8" fill="#262626" text-anchor="middle">H</text>
<text transform="translate(738.0,243.2) scale(1,1.1)" x="0" y="0" font-family="'Liberation Sans', sans-serif" font-size="12.8" fill="#262626" text-anchor="middle">I</text>
<text transform="translate(812.0,243.2) scale(1,1.1)" x="0" y="0" font-family="'Liberation Sans', sans-serif" font-size="12.8" fill="#262626" text-anchor="middle">J</text>
<text transform="translate(886.0,243.2) scale(1,1.1)" x="0" y="0" font-family="'Liberation Sans', sans-serif" font-size="12.8" fill="#262626" text-anchor="middle">K</text>
<text transform="translate(960.0,243.2) scale(1,1.1)" x="0" y="0" font-family="'Liberation Sans', sans-serif" font-size="12.8" fill="#262626" text-anchor="middle">L</text>
<text transform="translate(1033.5,243.2) scale(1,1.1)" x="0" y="0" font-family="'Liberation Sans', sans-serif" font-size="12.8" fill="#262626" text-anchor="middle">M</text>
<text transform="translate(1137.5,243.2) scale(1,1.1)" x="0" y="0" font-family="'Liberation Sans', sans-serif" font-size="12.8" fill="#262626" text-anchor="middle">N</text>
<text transform="translate(1272.0,243.2) scale(1,1.1)" x="0" y="0" font-family="'Liberation Sans', sans-serif" font-size="12.8" fill="#262626" text-anchor="middle">O</text>
<text transform="translate(1376.0,243.2) scale(1,1.1)" x="0" y="0" font-family="'Liberation Sans', sans-serif" font-size="12.8" fill="#262626" text-anchor="middle">P</text>
<text transform="translate(23,341.2) scale(1,1.12)" x="0" y="0" font-family="'Liberation Sans', sans-serif" font-size="12.3" fill="#262626" text-anchor="end">19</text>
<text transform="translate(23,439.2) scale(1,1.12)" x="0" y="0" font-family="'Liberation Sans', sans-serif" font-size="12.3" fill="#262626" text-anchor="end">20</text>
<text transform="translate(23,537.2) scale(1,1.12)" x="0" y="0" font-family="'Liberation Sans', sans-serif" font-size="12.3" fill="#262626" text-anchor="end">21</text>
<text transform="translate(23,635.6) scale(1,1.12)" x="0" y="0" font-family="'Liberation Sans', sans-serif" font-size="12.3" fill="#262626" text-anchor="end">22</text>
<g clip-path="url(#gridclip)">
<text transform="translate(62.83,292.15) scale(1,1.12)" x="0" y="0" font-family="'Liberation Sans', sans-serif" font-size="12.3" fill="#111" text-anchor="middle">Взята в</text>
<text transform="translate(64.5,308.45) scale(1,1.12)" x="0" y="0" font-family="'Liberation Sans', sans-serif" font-size="12.3" fill="#111" text-anchor="middle">работу</text>
<text transform="translate(140.3,300.3) scale(1,1.12)" x="0" y="0" font-family="'Liberation Sans', sans-serif" font-size="12.3" fill="#111" text-anchor="middle">-</text>
<text transform="translate(212.5,300.3) scale(1,1.12)" x="0" y="0" font-family="'Liberation Sans', sans-serif" font-size="12.3" fill="#111" text-anchor="middle">12</text>
<text transform="translate(286.5,300.3) scale(1,1.12)" x="0" y="0" font-family="'Liberation Sans', sans-serif" font-size="12.3" fill="#111" text-anchor="middle">6342</text>
<text transform="translate(360.5,300.3) scale(1,1.12)" x="0" y="0" font-family="'Liberation Sans', sans-serif" font-size="12.3" fill="#111" text-anchor="middle">2412</text>
<text transform="translate(454.5,300.3) scale(1,1.12)" x="0" y="0" font-family="'Liberation Sans', sans-serif" font-size="12.3" fill="#111" text-anchor="middle">ООО "ЗАРЯ"</text>
<text transform="translate(569.0,292.15) scale(1,1.12)" x="0" y="0" font-family="'Liberation Sans', sans-serif" font-size="12.3" fill="#111" text-anchor="middle">1430363391069667</text>
<text transform="translate(569.0,308.45) scale(1,1.12)" x="0" y="0" font-family="'Liberation Sans', sans-serif" font-size="12.3" fill="#111" text-anchor="middle">275</text>
<text transform="translate(665.3,300.3) scale(1,1.12)" x="0" y="0" font-family="'Liberation Sans', sans-serif" font-size="12.3" fill="#111" text-anchor="middle">-</text>
<text transform="translate(737.5,300.3) scale(1,1.12)" x="0" y="0" font-family="'Liberation Sans', sans-serif" font-size="12.3" fill="#111" text-anchor="middle">Нет</text>
<text transform="translate(809.83,284.0) scale(1,1.12)" x="0" y="0" font-family="'Liberation Sans', sans-serif" font-size="12.3" fill="#111" text-anchor="middle">06.09.2021</text>
<text transform="translate(809.83,300.3) scale(1,1.12)" x="0" y="0" font-family="'Liberation Sans', sans-serif" font-size="12.3" fill="#111" text-anchor="middle">15:48:25</text>
<text transform="translate(811.5,316.6) scale(1,1.12)" x="0" y="0" font-family="'Liberation Sans', sans-serif" font-size="12.3" fill="#111" text-anchor="middle">+0300</text>
<text transform="translate(883.83,284.0) scale(1,1.12)" x="0" y="0" font-family="'Liberation Sans', sans-serif" font-size="12.3" fill="#111" text-anchor="middle">06.09.2021</text>
<text transform="translate(885.5,300.3) scale(1,1.12)" x="0" y="0" font-family="'Liberation Sans', sans-serif" font-size="12.3" fill="#111" text-anchor="middle">15:48:25.57</text>
<text transform="translate(885.5,316.6) scale(1,1.12)" x="0" y="0" font-family="'Liberation Sans', sans-serif" font-size="12.3" fill="#111" text-anchor="middle">7</text>
<text transform="translate(959.5,300.3) scale(1,1.12)" x="0" y="0" font-family="'Liberation Sans', sans-serif" font-size="12.3" fill="#111" text-anchor="middle">06.09.2021</text>
<text transform="translate(1033.0,300.3) scale(1,1.12)" x="0" y="0" font-family="'Liberation Sans', sans-serif" font-size="12.3" fill="#111" text-anchor="middle">blockResult</text>
<text transform="translate(1138.8,300.3) scale(1,1.12)" x="0" y="0" font-family="'Liberation Sans', sans-serif" font-size="12.3" fill="#111" text-anchor="middle">-</text>
<text transform="translate(1273.3,300.3) scale(1,1.12)" x="0" y="0" font-family="'Liberation Sans', sans-serif" font-size="12.3" fill="#111" text-anchor="middle">-</text>
<text transform="translate(1375.5,267.7) scale(1,1.12)" x="0" y="0" font-family="'Liberation Sans', sans-serif" font-size="12.3" fill="#111" text-anchor="middle">611112285-</text>
<text transform="translate(1375.5,284.0) scale(1,1.12)" x="0" y="0" font-family="'Liberation Sans', sans-serif" font-size="12.3" fill="#111" text-anchor="middle">f28-33c7e-</text>
<text transform="translate(1375.5,300.3) scale(1,1.12)" x="0" y="0" font-family="'Liberation Sans', sans-serif" font-size="12.3" fill="#111" text-anchor="middle">81ce-</text>
<text transform="translate(1375.5,316.6) scale(1,1.12)" x="0" y="0" font-family="'Liberation Sans', sans-serif" font-size="12.3" fill="#111" text-anchor="middle">8c52222222</text>
<text transform="translate(1375.5,332.9) scale(1,1.12)" x="0" y="0" font-family="'Liberation Sans', sans-serif" font-size="12.3" fill="#111" text-anchor="middle">e</text>
<polygon points="176,247 181.5,247 176,252.5" fill="#008000"/>
<polygon points="250,247 255.5,247 250,252.5" fill="#008000"/>
<polygon points="324,247 329.5,247 324,252.5" fill="#008000"/>
<polygon points="512,247 517.5,247 512,252.5" fill="#008000"/>
<text transform="translate(62.83,390.15) scale(1,1.12)" x="0" y="0" font-family="'Liberation Sans', sans-serif" font-size="12.3" fill="#111" text-anchor="middle">Взята в</text>
<text transform="translate(64.5,406.45) scale(1,1.12)" x="0" y="0" font-family="'Liberation Sans', sans-serif" font-size="12.3" fill="#111" text-anchor="middle">работу</text>
<text transform="translate(140.3,398.3) scale(1,1.12)" x="0" y="0" font-family="'Liberation Sans', sans-serif" font-size="12.3" fill="#111" text-anchor="middle">-</text>
<text transform="translate(212.5,398.3) scale(1,1.12)" x="0" y="0" font-family="'Liberation Sans', sans-serif" font-size="12.3" fill="#111" text-anchor="middle">62</text>
<text transform="translate(286.5,398.3) scale(1,1.12)" x="0" y="0" font-family="'Liberation Sans', sans-serif" font-size="12.3" fill="#111" text-anchor="middle">7652</text>
<text transform="translate(360.5,398.3) scale(1,1.12)" x="0" y="0" font-family="'Liberation Sans', sans-serif" font-size="12.3" fill="#111" text-anchor="middle">4215</text>
<text transform="translate(454.5,398.3) scale(1,1.12)" x="0" y="0" font-family="'Liberation Sans', sans-serif" font-size="12.3" fill="#111" text-anchor="middle">ООО "МАШИНА"</text>
<text transform="translate(569.0,390.15) scale(1,1.12)" x="0" y="0" font-family="'Liberation Sans', sans-serif" font-size="12.3" fill="#111" text-anchor="middle">1430363391069667</text>
<text transform="translate(569.0,406.45) scale(1,1.12)" x="0" y="0" font-family="'Liberation Sans', sans-serif" font-size="12.3" fill="#111" text-anchor="middle">275</text>
<text transform="translate(665.3,398.3) scale(1,1.12)" x="0" y="0" font-family="'Liberation Sans', sans-serif" font-size="12.3" fill="#111" text-anchor="middle">-</text>
<text transform="translate(737.5,398.3) scale(1,1.12)" x="0" y="0" font-family="'Liberation Sans', sans-serif" font-size="12.3" fill="#111" text-anchor="middle">Нет</text>
<text transform="translate(809.83,382.0) scale(1,1.12)" x="0" y="0" font-family="'Liberation Sans', sans-serif" font-size="12.3" fill="#111" text-anchor="middle">06.09.2021</text>
<text transform="translate(809.83,398.3) scale(1,1.12)" x="0" y="0" font-family="'Liberation Sans', sans-serif" font-size="12.3" fill="#111" text-anchor="middle">15:48:24</text>
<text transform="translate(811.5,414.6) scale(1,1.12)" x="0" y="0" font-family="'Liberation Sans', sans-serif" font-size="12.3" fill="#111" text-anchor="middle">+0300</text>
<text transform="translate(883.83,382.0) scale(1,1.12)" x="0" y="0" font-family="'Liberation Sans', sans-serif" font-size="12.3" fill="#111" text-anchor="middle">06.09.2021</text>
<text transform="translate(885.5,398.3) scale(1,1.12)" x="0" y="0" font-family="'Liberation Sans', sans-serif" font-size="12.3" fill="#111" text-anchor="middle">15:48:24.84</text>
<text transform="translate(885.5,414.6) scale(1,1.12)" x="0" y="0" font-family="'Liberation Sans', sans-serif" font-size="12.3" fill="#111" text-anchor="middle">8</text>
<text transform="translate(959.5,398.3) scale(1,1.12)" x="0" y="0" font-family="'Liberation Sans', sans-serif" font-size="12.3" fill="#111" text-anchor="middle">06.09.2021</text>
<text transform="translate(1033.0,398.3) scale(1,1.12)" x="0" y="0" font-family="'Liberation Sans', sans-serif" font-size="12.3" fill="#111" text-anchor="middle">blockResult</text>
<text transform="translate(1138.8,398.3) scale(1,1.12)" x="0" y="0" font-family="'Liberation Sans', sans-serif" font-size="12.3" fill="#111" text-anchor="middle">-</text>
<text transform="translate(1273.3,398.3) scale(1,1.12)" x="0" y="0" font-family="'Liberation Sans', sans-serif" font-size="12.3" fill="#111" text-anchor="middle">-</text>
<text transform="translate(1375.5,365.7) scale(1,1.12)" x="0" y="0" font-family="'Liberation Sans', sans-serif" font-size="12.3" fill="#111" text-anchor="middle">611112285-</text>
<text transform="translate(1375.5,382.0) scale(1,1.12)" x="0" y="0" font-family="'Liberation Sans', sans-serif" font-size="12.3" fill="#111" text-anchor="middle">f28-33c7e-</text>
<text transform="translate(1375.5,398.3) scale(1,1.12)" x="0" y="0" font-family="'Liberation Sans', sans-serif" font-size="12.3" fill="#111" text-anchor="middle">81ce-</text>
<text transform="translate(1375.5,414.6) scale(1,1.12)" x="0" y="0" font-family="'Liberation Sans', sans-serif" font-size="12.3" fill="#111" text-anchor="middle">8c52222222</text>
<text transform="translate(1375.5,430.9) scale(1,1.12)" x="0" y="0" font-family="'Liberation Sans', sans-serif" font-size="12.3" fill="#111" text-anchor="middle">e</text>
<polygon points="176,345 181.5,345 176,350.5" fill="#008000"/>
<polygon points="250,345 255.5,345 250,350.5" fill="#008000"/>
<polygon points="324,345 329.5,345 324,350.5" fill="#008000"/>
<polygon points="512,345 517.5,345 512,350.5" fill="#008000"/>
<text transform="translate(62.83,488.15) scale(1,1.12)" x="0" y="0" font-family="'Liberation Sans', sans-serif" font-size="12.3" fill="#111" text-anchor="middle">Взята в</text>
<text transform="translate(64.5,504.45) scale(1,1.12)" x="0" y="0" font-family="'Liberation Sans', sans-serif" font-size="12.3" fill="#111" text-anchor="middle">работу</text>
<text transform="translate(140.3,496.3) scale(1,1.12)" x="0" y="0" font-family="'Liberation Sans', sans-serif" font-size="12.3" fill="#111" text-anchor="middle">-</text>
<text transform="translate(212.5,496.3) scale(1,1.12)" x="0" y="0" font-family="'Liberation Sans', sans-serif" font-size="12.3" fill="#111" text-anchor="middle">14</text>
<text transform="translate(286.5,496.3) scale(1,1.12)" x="0" y="0" font-family="'Liberation Sans', sans-serif" font-size="12.3" fill="#111" text-anchor="middle">4524</text>
<text transform="translate(360.5,496.3) scale(1,1.12)" x="0" y="0" font-family="'Liberation Sans', sans-serif" font-size="12.3" fill="#111" text-anchor="middle">4214</text>
<text transform="translate(454.5,496.3) scale(1,1.12)" x="0" y="0" font-family="'Liberation Sans', sans-serif" font-size="12.3" fill="#111" text-anchor="middle">ООО "РАКЕТА"</text>
<text transform="translate(569.0,488.15) scale(1,1.12)" x="0" y="0" font-family="'Liberation Sans', sans-serif" font-size="12.3" fill="#111" text-anchor="middle">1430363391069667</text>
<text transform="translate(569.0,504.45) scale(1,1.12)" x="0" y="0" font-family="'Liberation Sans', sans-serif" font-size="12.3" fill="#111" text-anchor="middle">275</text>
<text transform="translate(665.3,496.3) scale(1,1.12)" x="0" y="0" font-family="'Liberation Sans', sans-serif" font-size="12.3" fill="#111" text-anchor="middle">-</text>
<text transform="translate(737.5,496.3) scale(1,1.12)" x="0" y="0" font-family="'Liberation Sans', sans-serif" font-size="12.3" fill="#111" text-anchor="middle">Нет</text>
<text transform="translate(809.83,480.0) scale(1,1.12)" x="0" y="0" font-family="'Liberation Sans', sans-serif" font-size="12.3" fill="#111" text-anchor="middle">06.09.2021</text>
<text transform="translate(809.83,496.3) scale(1,1.12)" x="0" y="0" font-family="'Liberation Sans', sans-serif" font-size="12.3" fill="#111" text-anchor="middle">15:48:24</text>
<text transform="translate(811.5,512.6) scale(1,1.12)" x="0" y="0" font-family="'Liberation Sans', sans-serif" font-size="12.3" fill="#111" text-anchor="middle">+0300</text>
<text transform="translate(883.83,480.0) scale(1,1.12)" x="0" y="0" font-family="'Liberation Sans', sans-serif" font-size="12.3" fill="#111" text-anchor="middle">06.09.2021</text>
<text transform="translate(885.5,496.3) scale(1,1.12)" x="0" y="0" font-family="'Liberation Sans', sans-serif" font-size="12.3" fill="#111" text-anchor="middle">15:48:25.15</text>
<text transform="translate(885.5,512.6) scale(1,1.12)" x="0" y="0" font-family="'Liberation Sans', sans-serif" font-size="12.3" fill="#111" text-anchor="middle">1</text>
<text transform="translate(959.5,496.3) scale(1,1.12)" x="0" y="0" font-family="'Liberation Sans', sans-serif" font-size="12.3" fill="#111" text-anchor="middle">06.09.2021</text>
<text transform="translate(1033.0,496.3) scale(1,1.12)" x="0" y="0" font-family="'Liberation Sans', sans-serif" font-size="12.3" fill="#111" text-anchor="middle">blockResult</text>
<text transform="translate(1138.8,496.3) scale(1,1.12)" x="0" y="0" font-family="'Liberation Sans', sans-serif" font-size="12.3" fill="#111" text-anchor="middle">-</text>
<text transform="translate(1273.3,496.3) scale(1,1.12)" x="0" y="0" font-family="'Liberation Sans', sans-serif" font-size="12.3" fill="#111" text-anchor="middle">-</text>
<text transform="translate(1375.5,463.7) scale(1,1.12)" x="0" y="0" font-family="'Liberation Sans', sans-serif" font-size="12.3" fill="#111" text-anchor="middle">611112285-</text>
<text transform="translate(1375.5,480.0) scale(1,1.12)" x="0" y="0" font-family="'Liberation Sans', sans-serif" font-size="12.3" fill="#111" text-anchor="middle">f28-33c7e-</text>
<text transform="translate(1375.5,496.3) scale(1,1.12)" x="0" y="0" font-family="'Liberation Sans', sans-serif" font-size="12.3" fill="#111" text-anchor="middle">81ce-</text>
<text transform="translate(1375.5,512.6) scale(1,1.12)" x="0" y="0" font-family="'Liberation Sans', sans-serif" font-size="12.3" fill="#111" text-anchor="middle">8c52222222</text>
<text transform="translate(1375.5,528.9) scale(1,1.12)" x="0" y="0" font-family="'Liberation Sans', sans-serif" font-size="12.3" fill="#111" text-anchor="middle">e</text>
<polygon points="176,443 181.5,443 176,448.5" fill="#008000"/>
<polygon points="250,443 255.5,443 250,448.5" fill="#008000"/>
<polygon points="324,443 329.5,443 324,448.5" fill="#008000"/>
<polygon points="512,443 517.5,443 512,448.5" fill="#008000"/>
<text transform="translate(62.83,586.15) scale(1,1.12)" x="0" y="0" font-family="'Liberation Sans', sans-serif" font-size="12.3" fill="#111" text-anchor="middle">Взята в</text>
<text transform="translate(64.5,602.45) scale(1,1.12)" x="0" y="0" font-family="'Liberation Sans', sans-serif" font-size="12.3" fill="#111" text-anchor="middle">работу</text>
<text transform="translate(140.3,594.3) scale(1,1.12)" x="0" y="0" font-family="'Liberation Sans', sans-serif" font-size="12.3" fill="#111" text-anchor="middle">-</text>
<text transform="translate(212.5,594.3) scale(1,1.12)" x="0" y="0" font-family="'Liberation Sans', sans-serif" font-size="12.3" fill="#111" text-anchor="middle">43</text>
<text transform="translate(286.5,594.3) scale(1,1.12)" x="0" y="0" font-family="'Liberation Sans', sans-serif" font-size="12.3" fill="#111" text-anchor="middle">9721</text>
<text transform="translate(360.5,594.3) scale(1,1.12)" x="0" y="0" font-family="'Liberation Sans', sans-serif" font-size="12.3" fill="#111" text-anchor="middle">2569</text>
<text transform="translate(454.5,594.3) scale(1,1.12)" x="0" y="0" font-family="'Liberation Sans', sans-serif" font-size="12.3" fill="#111" text-anchor="middle">ООО "МОТО"</text>
<text transform="translate(569.0,586.15) scale(1,1.12)" x="0" y="0" font-family="'Liberation Sans', sans-serif" font-size="12.3" fill="#111" text-anchor="middle">1430363391069667</text>
<text transform="translate(569.0,602.45) scale(1,1.12)" x="0" y="0" font-family="'Liberation Sans', sans-serif" font-size="12.3" fill="#111" text-anchor="middle">275</text>
<text transform="translate(665.3,594.3) scale(1,1.12)" x="0" y="0" font-family="'Liberation Sans', sans-serif" font-size="12.3" fill="#111" text-anchor="middle">-</text>
<text transform="translate(737.5,594.3) scale(1,1.12)" x="0" y="0" font-family="'Liberation Sans', sans-serif" font-size="12.3" fill="#111" text-anchor="middle">Нет</text>
<text transform="translate(809.83,578.0) scale(1,1.12)" x="0" y="0" font-family="'Liberation Sans', sans-serif" font-size="12.3" fill="#111" text-anchor="middle">06.09.2021</text>
<text transform="translate(809.83,594.3) scale(1,1.12)" x="0" y="0" font-family="'Liberation Sans', sans-serif" font-size="12.3" fill="#111" text-anchor="middle">17:47:48</text>
<text transform="translate(811.5,610.6) scale(1,1.12)" x="0" y="0" font-family="'Liberation Sans', sans-serif" font-size="12.3" fill="#111" text-anchor="middle">+0300</text>
<text transform="translate(883.83,578.0) scale(1,1.12)" x="0" y="0" font-family="'Liberation Sans', sans-serif" font-size="12.3" fill="#111" text-anchor="middle">06.09.2021</text>
<text transform="translate(885.5,594.3) scale(1,1.12)" x="0" y="0" font-family="'Liberation Sans', sans-serif" font-size="12.3" fill="#111" text-anchor="middle">17:47:49.15</text>
<text transform="translate(885.5,610.6) scale(1,1.12)" x="0" y="0" font-family="'Liberation Sans', sans-serif" font-size="12.3" fill="#111" text-anchor="middle">0</text>
<text transform="translate(959.5,594.3) scale(1,1.12)" x="0" y="0" font-family="'Liberation Sans', sans-serif" font-size="12.3" fill="#111" text-anchor="middle">06.09.2021</text>
<text transform="translate(1033.0,594.3) scale(1,1.12)" x="0" y="0" font-family="'Liberation Sans', sans-serif" font-size="12.3" fill="#111" text-anchor="middle">blockResult</text>
<text transform="translate(1138.8,594.3) scale(1,1.12)" x="0" y="0" font-family="'Liberation Sans', sans-serif" font-size="12.3" fill="#111" text-anchor="middle">-</text>
<text transform="translate(1273.3,594.3) scale(1,1.12)" x="0" y="0" font-family="'Liberation Sans', sans-serif" font-size="12.3" fill="#111" text-anchor="middle">-</text>
<text transform="translate(1375.5,561.7) scale(1,1.12)" x="0" y="0" font-family="'Liberation Sans', sans-serif" font-size="12.3" fill="#111" text-anchor="middle">611112285-</text>
<text transform="translate(1375.5,578.0) scale(1,1.12)" x="0" y="0" font-family="'Liberation Sans', sans-serif" font-size="12.3" fill="#111" text-anchor="middle">f28-33c7e-</text>
<text transform="translate(1375.5,594.3) scale(1,1.12)" x="0" y="0" font-family="'Liberation Sans', sans-serif" font-size="12.3" fill="#111" text-anchor="middle">81ce-</text>
<text transform="translate(1375.5,610.6) scale(1,1.12)" x="0" y="0" font-family="'Liberation Sans', sans-serif" font-size="12.3" fill="#111" text-anchor="middle">8c52222222</text>
<text transform="translate(1375.5,626.9) scale(1,1.12)" x="0" y="0" font-family="'Liberation Sans', sans-serif" font-size="12.3" fill="#111" text-anchor="middle">e</text>
<polygon points="176,541 181.5,541 176,546.5" fill="#008000"/>
<polygon points="250,541 255.5,541 250,546.5" fill="#008000"/>
<polygon points="324,541 329.5,541 324,546.5" fill="#008000"/>
<polygon points="512,541 517.5,541 512,546.5" fill="#008000"/>
</g>
<rect x="1413" y="231" width="20" height="16" fill="#e6e6e6" />
<rect x="1413" y="247" width="19" height="385" fill="#dcdcdc" />
<rect x="1432" y="247" width="1" height="385" fill="#efedef" />
<rect x="1416.5" y="233.5" width="14" height="13" fill="#ffffff" stroke="#b9b9b9" stroke-width="1"/>
<polygon points="1420,241.5 1427,241.5 1423.5,237.5" fill="#676767"/>
<rect x="1416.5" y="538.5" width="14" height="47" fill="#ffffff" stroke="#b9b9b9" stroke-width="1"/>
<rect x="1416.5" y="618.5" width="14" height="13" fill="#ffffff" stroke="#b9b9b9" stroke-width="1"/>
<polygon points="1420,623 1427,623 1423.5,627" fill="#676767"/>
<rect x="4" y="633" width="1429" height="26" fill="#e6e6e6" />
<rect x="3" y="659" width="1430" height="1" fill="#c8c8c8" />
<polygon points="33,641.5 33,648.5 29,645" fill="#c4c4c4"/>
<polygon points="57,641.5 57,648.5 61,645" fill="#c4c4c4"/>
<rect x="99" y="636" width="1" height="19" fill="#a8a8a8" />
<text x="111.4" y="649.4" font-family="'Liberation Sans', sans-serif" font-size="12" fill="#444" textLength="32.3" lengthAdjust="spacingAndGlyphs" >СВОД</text>
<rect x="158" y="633" width="127" height="21" fill="#ffffff" />
<rect x="157" y="633" width="1" height="23" fill="#ababab" />
<rect x="285" y="633" width="1" height="23" fill="#ababab" />
<rect x="157" y="654" width="129" height="2" fill="#217346" />
<text x="168.3" y="649.6" font-family="'Liberation Sans', sans-serif" font-size="12.3" fill="#217346" font-weight="bold" textLength="104.8" lengthAdjust="spacingAndGlyphs" >Личные очереди</text>
<text x="297.09999999999997" y="649.4" font-family="'Liberation Sans', sans-serif" font-size="12" fill="#444" textLength="93.9" lengthAdjust="spacingAndGlyphs" >Общая очередь</text>
<rect x="405" y="636" width="1" height="19" fill="#a8a8a8" />
<text x="418.2" y="649.4" font-family="'Liberation Sans', sans-serif" font-size="12" fill="#444" textLength="71.0" lengthAdjust="spacingAndGlyphs" >Переведено</text>
<rect x="502" y="636" width="1" height="19" fill="#a8a8a8" />
<circle cx="542" cy="645.4" r="7.4" fill="none" stroke="#7a7a7a" stroke-width="1.2"/>
<path d="M538.2,645.4 H545.8 M542,641.6 V649.2" stroke="#666" stroke-width="1.6"/>
<rect x="861" y="641" width="2" height="2" fill="#a0a0a0" />
<rect x="861" y="645" width="2" height="2" fill="#a0a0a0" />
<rect x="861" y="649" width="2" height="2" fill="#a0a0a0" />
<rect x="892" y="638" width="521" height="15" fill="#dcdcdc" />
<rect x="877.5" y="639.5" width="15" height="13" fill="#ffffff" stroke="#b9b9b9" stroke-width="1"/>
<polygon points="887,642.5 887,649.5 883,646" fill="#676767"/>
<rect x="892.5" y="639.5" width="206" height="13" fill="#ffffff" stroke="#b9b9b9" stroke-width="1"/>
<rect x="1399.5" y="639.5" width="13" height="13" fill="#ffffff" stroke="#b9b9b9" stroke-width="1"/>
<polygon points="1404.5,642.5 1404.5,649.5 1408.5,646" fill="#676767"/>
<rect x="4" y="660" width="1429" height="20" fill="#f1f1f1" />
<text x="10.200000000000001" y="673.3" font-family="'Liberation Sans', sans-serif" font-size="10.6" fill="#444" textLength="35.2" lengthAdjust="spacingAndGlyphs" >Готово</text>
<rect x="1143" y="660" width="36" height="20" fill="#c8c8c8" />
<rect x="1154.5" y="663.5" width="12" height="11" fill="#e8e8e8" stroke="#6f6f6f" stroke-width="1.4"/>
<path d="M1158.5,663.5 V674.5 M1162.5,663.5 V674.5 M1154.5,667.2 H1166.5 M1154.5,670.9 H1166.5" stroke="#6f6f6f" stroke-width="1.3"/>
<rect x="1191" y="663.5" width="12.5" height="11" fill="#fafafa" stroke="#707070" stroke-width="1.2"/>
<rect x="1193.8" y="665.8" width="7" height="6.5" fill="#dcdcdc" stroke="#707070" stroke-width="1"/>
<path d="M1227.8,663.5 H1240 V674.5 H1227.8 Z" fill="#fafafa" stroke="#707070" stroke-width="1.2"/>
<path d="M1227.8,670.5 H1233.5 V663.5 M1236.3,663.5 V670.5" fill="none" stroke="#707070" stroke-width="1.1"/>
<rect x="1257" y="668.5" width="6" height="1.8" fill="#555" />
<rect x="1266.5" y="668.5" width="96" height="1.2" fill="#c2c2c2" />
<rect x="1312.6" y="664" width="3.8" height="10" fill="#5a5a5a" />
<rect x="1366" y="668.7" width="8" height="1.8" fill="#555" />
<rect x="1369.1" y="665.5" width="1.8" height="8.3" fill="#555" />
<text x="1388.9" y="673.3" font-family="'Liberation Sans', sans-serif" font-size="11" fill="#444" textLength="25.5" lengthAdjust="spacingAndGlyphs" >100%</text>
<rect x="2" y="680" width="1433" height="1" fill="#3b7d58" />
</svg>
</body></html>
